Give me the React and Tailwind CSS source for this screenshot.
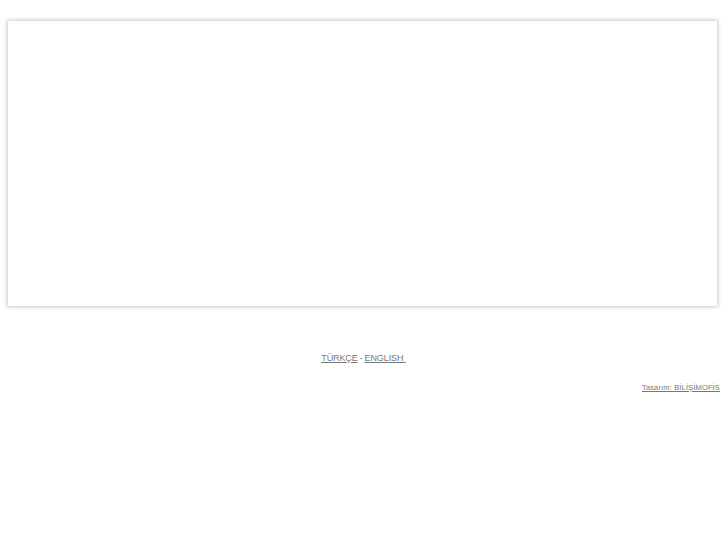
export default function App() {
  return (
    <div className="w-[727px] h-[545px] bg-white" style={{ fontFamily: '"Liberation Sans", Arial, sans-serif' }}>
      <div className="pt-[21px] px-[8px]">
        <div className="h-[285px] w-[709px] bg-white shadow-[0_0_4px_1px_rgba(0,0,0,0.22)]" />
      </div>
      <div className="mt-[46px] flex justify-center text-[9px] leading-[12px] text-[#777] tracking-[-0.1px]">
        <a className="underline whitespace-pre" href="#">TÜRKÇE</a>
        <span className="mx-[2px]">-</span>
        <a className="underline whitespace-pre" href="#">ENGLISH </a>
      </div>
      <div className="mt-[19px] flex justify-end pr-[7px] text-[7.5px] leading-[10px] text-[#777] tracking-[0.15px]">
        <a className="underline" href="#">Tasarım: BİLİŞİMOFİS</a>
      </div>
    </div>
  );
}
